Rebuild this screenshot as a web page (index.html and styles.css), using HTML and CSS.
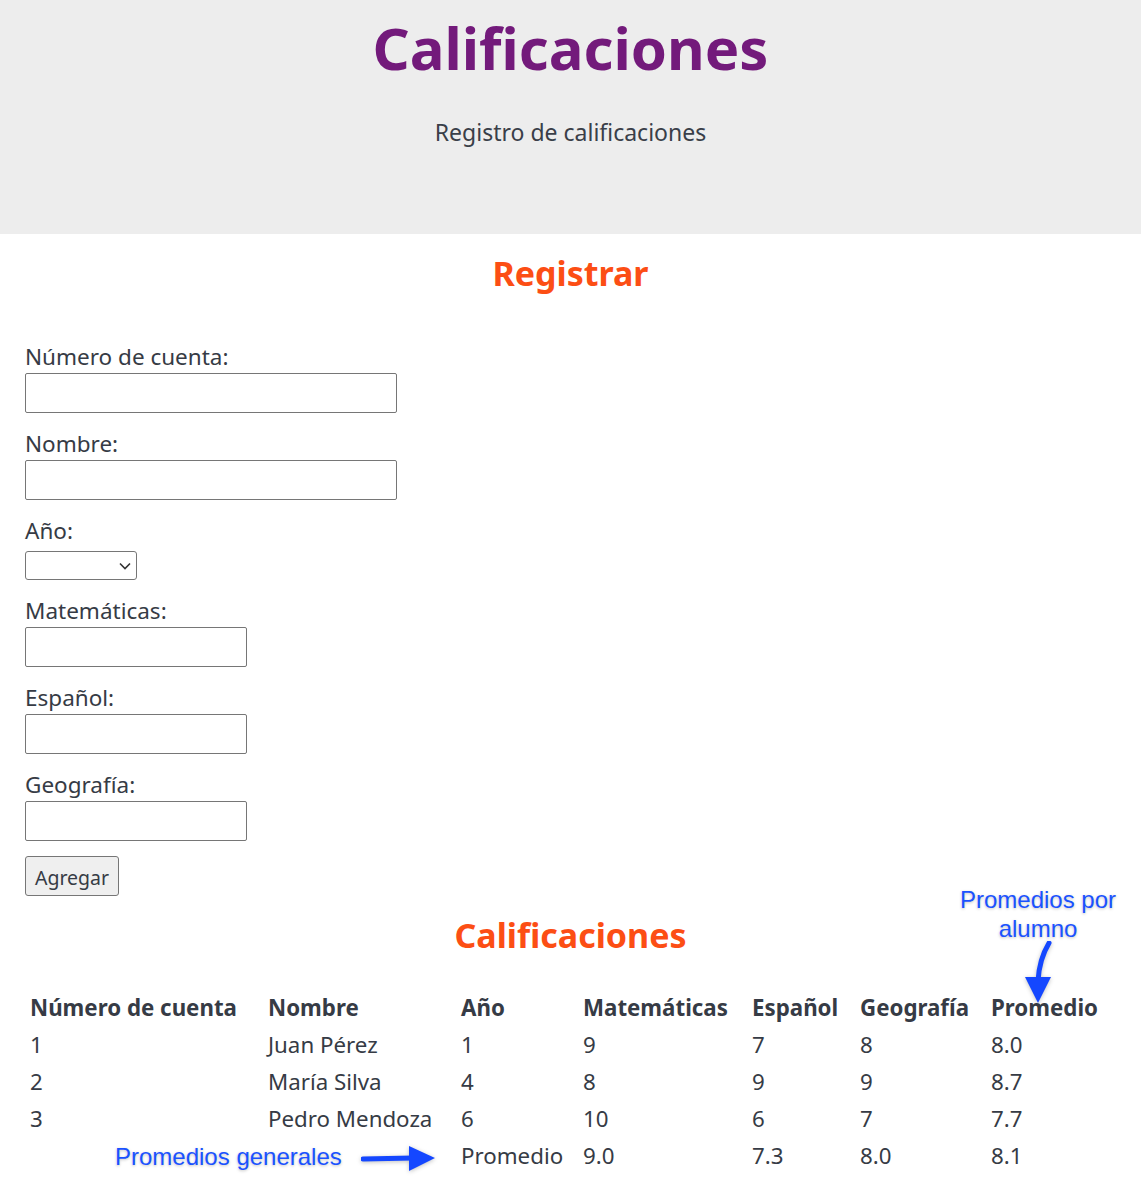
FILE: index.html
```html
<!DOCTYPE html>
<html lang="es">
<head>
<meta charset="utf-8">
<title>Calificaciones</title>
<link rel="stylesheet" href="styles.css">
</head>
<body>
<header class="hero">
  <h1 class="hero-title">Calificaciones</h1>
  <p class="hero-sub">Registro de calificaciones</p>
</header>
<main class="page">
  <h2 class="section-title title-register">Registrar</h2>
  <form class="form">
    <div class="field">
      <label class="field-label">Número de cuenta:</label>
      <input class="input input-wide" type="text">
    </div>
    <div class="field">
      <label class="field-label">Nombre:</label>
      <input class="input input-wide" type="text">
    </div>
    <div class="field">
      <label class="field-label">Año:</label>
      <span class="select-wrap">
        <select class="select"><option></option></select>
        <svg class="chevron" width="12" height="8" viewBox="0 0 12 8"><path d="M1 1.5 L6 6.5 L11 1.5" fill="none" stroke="#333" stroke-width="1.6"/></svg>
      </span>
    </div>
    <div class="field">
      <label class="field-label">Matemáticas:</label>
      <input class="input input-narrow" type="text">
    </div>
    <div class="field">
      <label class="field-label">Español:</label>
      <input class="input input-narrow" type="text">
    </div>
    <div class="field">
      <label class="field-label">Geografía:</label>
      <input class="input input-narrow" type="text">
    </div>
    <button class="btn" type="button">Agregar</button>
  </form>

  <section class="results">
    <h2 class="section-title title-results">Calificaciones</h2>
    <table class="grades">
      <thead>
        <tr>
          <th class="c1">Número de cuenta</th>
          <th class="c2">Nombre</th>
          <th class="c3">Año</th>
          <th class="c4">Matemáticas</th>
          <th class="c5">Español</th>
          <th class="c6">Geografía</th>
          <th class="c7">Promedio</th>
        </tr>
      </thead>
      <tbody>
        <tr><td>1</td><td>Juan Pérez</td><td>1</td><td>9</td><td>7</td><td>8</td><td>8.0</td></tr>
        <tr><td>2</td><td>María Silva</td><td>4</td><td>8</td><td>9</td><td>9</td><td>8.7</td></tr>
        <tr><td>3</td><td>Pedro Mendoza</td><td>6</td><td>10</td><td>6</td><td>7</td><td>7.7</td></tr>
        <tr><td></td><td></td><td>Promedio</td><td>9.0</td><td>7.3</td><td>8.0</td><td>8.1</td></tr>
      </tbody>
    </table>

    <div class="note note-student">Promedios por<br>alumno</div>
    <svg class="arrow arrow-down" width="40" height="66" viewBox="0 0 40 66">
      <path d="M26 2 C 20 12, 16 22, 15 40" fill="none" stroke="#1447ff" stroke-width="5" stroke-linecap="round"/>
      <polygon points="2,36 28,36 15,62" fill="#1447ff"/>
    </svg>
    <div class="note note-general">Promedios generales</div>
    <svg class="arrow arrow-right" width="76" height="28" viewBox="0 0 76 28">
      <path d="M2 14 L52 13" fill="none" stroke="#1447ff" stroke-width="5" stroke-linecap="round"/>
      <polygon points="48,1 48,26 74,13" fill="#1447ff"/>
    </svg>
  </section>
</main>
</body>
</html>
```
FILE: styles.css
```css
* { box-sizing: border-box; }

html, body {
  margin: 0;
  padding: 0;
  background: #ffffff;
}

body {
  font-family: "Noto Sans", "Open Sans", sans-serif;
  color: #363b45;
}

.hero {
  background: #ededed;
  height: 234px;
  text-align: center;
  padding-top: 12px;
}

.hero-title {
  margin: 0;
  font-size: 58px;
  line-height: 72px;
  font-weight: 700;
  color: #731a7b;
}

.hero-sub {
  margin: 33px 0 0;
  font-size: 23px;
  line-height: 30px;
  color: #3a3f49;
}

.page {
  position: relative;
  padding: 0 25px 28px;
}

.section-title {
  margin: 0;
  text-align: center;
  font-size: 34px;
  font-weight: 700;
  color: #fc4e14;
  line-height: 40px;
}

.title-register {
  padding-top: 19px;
}

.form {
  padding-top: 52px;
}

.field {
  margin-bottom: 19px;
}

.field-label {
  display: block;
  font-size: 22.5px;
  line-height: 24px;
  margin-bottom: 4px;
  color: #363b45;
}

.input {
  display: block;
  height: 40px;
  border: 1px solid #767676;
  border-radius: 2px;
  background: #fff;
  margin: 0;
}

.input-wide { width: 372px; }
.input-narrow { width: 222px; }

.select-wrap {
  position: relative;
  display: inline-block;
  margin-top: 4px;
  vertical-align: top;
}

.select {
  display: block;
  width: 112px;
  height: 29px;
  border: 1px solid #767676;
  border-radius: 3px;
  background: #fff;
  appearance: none;
  -webkit-appearance: none;
  margin: 0;
}

.chevron {
  position: absolute;
  right: 6px;
  top: 11px;
}

.btn {
  display: block;
  margin-top: -4px;
  width: 94px;
  height: 40px;
  border: 1px solid #767676;
  border-radius: 3px;
  background: #efefef;
  font-family: inherit;
  font-size: 19.5px;
  color: #363b45;
  padding: 2px 0 0;
}

.results {
  position: relative;
}

.title-results {
  margin-top: 19px;
}

.grades {
  margin-top: 34px;
  table-layout: fixed;
  width: 1091px;
  border-collapse: collapse;
  font-size: 22.3px;
  color: #363b45;
}

.grades th,
.grades td {
  text-align: left;
  padding: 0 0 0 5px;
  height: 37px;
  white-space: nowrap;
}

.grades th {
  font-weight: 700;
}

.c1 { width: 238px; }
.c2 { width: 193px; }
.c3 { width: 122px; }
.c4 { width: 169px; }
.c5 { width: 108px; }
.c6 { width: 131px; }
.c7 { width: 130px; }

.note {
  position: absolute;
  font-family: "Liberation Sans", Arial, sans-serif;
  font-size: 24px;
  line-height: 29px;
  color: #1a52ff;
  text-shadow: 0 1px 3px rgba(0, 0, 0, 0.25);
  text-align: center;
  white-space: nowrap;
}

.note-student {
  left: 910px;
  top: -30px;
  width: 206px;
}

.note-general {
  left: 90px;
  top: 227px;
}

.arrow {
  position: absolute;
  filter: drop-shadow(0 1px 2px rgba(0, 0, 0, 0.25));
}

.arrow-down {
  left: 998px;
  top: 26px;
}

.arrow-right {
  left: 336px;
  top: 230px;
}
```
